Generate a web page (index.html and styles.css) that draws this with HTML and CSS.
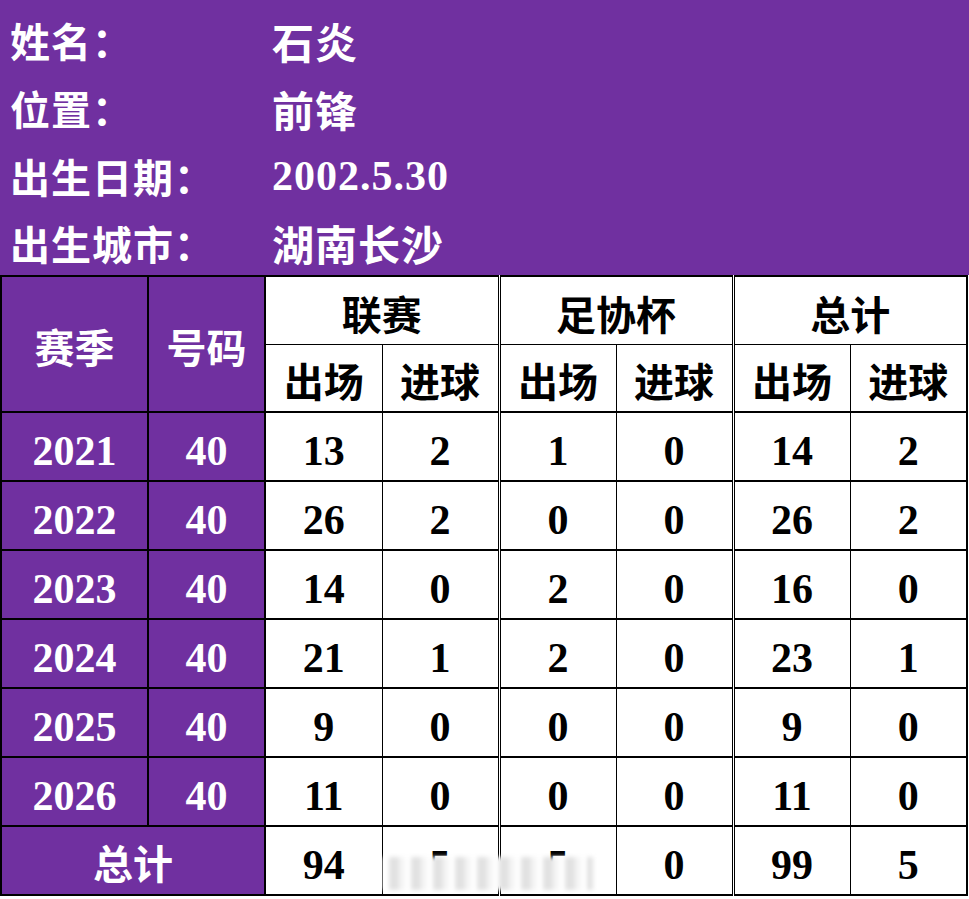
FILE: index.html
```html
<!DOCTYPE html>
<html lang="zh-CN">
<head>
<meta charset="utf-8">
<title>石炎</title>
<link rel="stylesheet" href="styles.css">
</head>
<body>
<div class="page">
  <div class="info">
    <div class="label">姓名：</div><div class="value">石炎</div>
    <div class="label">位置：</div><div class="value">前锋</div>
    <div class="label">出生日期：</div><div class="value">2002.5.30</div>
    <div class="label">出生城市：</div><div class="value">湖南长沙</div>
  </div>
  <div class="table-wrap">
    <table class="stats">
      <colgroup>
        <col class="c-season"><col class="c-num">
        <col class="c-d"><col class="c-d"><col class="c-d"><col class="c-d"><col class="c-d"><col class="c-d">
      </colgroup>
      <thead>
        <tr class="h1">
          <th rowspan="2" class="p">赛季</th>
          <th rowspan="2" class="p">号码</th>
          <th colspan="2" class="grp">联赛</th>
          <th colspan="2" class="grp dbl">足协杯</th>
          <th colspan="2" class="grp dbl">总计</th>
        </tr>
        <tr class="h2">
          <th>出场</th><th>进球</th>
          <th class="dbl">出场</th><th>进球</th>
          <th class="dbl">出场</th><th>进球</th>
        </tr>
      </thead>
      <tbody>
        <tr><td class="p">2021</td><td class="p">40</td><td>13</td><td>2</td><td class="dbl">1</td><td>0</td><td class="dbl">14</td><td>2</td></tr>
        <tr><td class="p">2022</td><td class="p">40</td><td>26</td><td>2</td><td class="dbl">0</td><td>0</td><td class="dbl">26</td><td>2</td></tr>
        <tr><td class="p">2023</td><td class="p">40</td><td>14</td><td>0</td><td class="dbl">2</td><td>0</td><td class="dbl">16</td><td>0</td></tr>
        <tr><td class="p">2024</td><td class="p">40</td><td>21</td><td>1</td><td class="dbl">2</td><td>0</td><td class="dbl">23</td><td>1</td></tr>
        <tr><td class="p">2025</td><td class="p">40</td><td>9</td><td>0</td><td class="dbl">0</td><td>0</td><td class="dbl">9</td><td>0</td></tr>
        <tr><td class="p">2026</td><td class="p">40</td><td>11</td><td>0</td><td class="dbl">0</td><td>0</td><td class="dbl">11</td><td>0</td></tr>
        <tr class="total"><td colspan="2" class="p cjk">总计</td><td>94</td><td>5</td><td class="dbl">5</td><td>0</td><td class="dbl">99</td><td>5</td></tr>
      </tbody>
    </table>
    <div class="smudge"></div>
  </div>
</div>
</body>
</html>
```
FILE: styles.css
```css
html, body {
  margin: 0;
  padding: 0;
  background: #ffffff;
}
.page {
  width: 969px;
  font-family: "Liberation Serif", "Noto Sans CJK SC", serif;
  font-weight: 700;
}
.info {
  box-sizing: border-box;
  height: 275px;
  padding-top: 6px;
  background: #7030a0;
  color: #ffffff;
  display: grid;
  grid-template-columns: 272px 1fr;
  grid-template-rows: 68px 68px 68px 65px;
  align-items: center;
  font-size: 40px;
}
.info .label {
  padding-left: 10px;
  font-family: "Noto Sans CJK SC", sans-serif;
  letter-spacing: 1px;
}
.info .value {
  font-family: "Liberation Serif", "Noto Sans CJK SC", serif;
  font-size: 42px;
  letter-spacing: 1px;
}
.table-wrap {
  position: relative;
  width: 969px;
}
.stats {
  border-collapse: collapse;
  table-layout: fixed;
  width: 967px;
  border: 2px solid #000;
}
.c-season { width: 147px; }
.c-num { width: 117px; }
.c-d { width: 117px; }
.stats th, .stats td {
  padding: 8px 0 0 0;
  text-align: center;
  vertical-align: middle;
  border: 1px solid #000;
  color: #000;
  background: #fff;
  line-height: 1;
}
.stats th {
  font-family: "Noto Sans CJK SC", sans-serif;
  font-size: 40px;
  font-weight: 700;
  padding-top: 4px;
}
.stats td {
  font-size: 42px;
  height: 59px;
}
.stats tr.h1 th { height: 63px; }
.stats tr.h2 th { height: 62px; border-bottom: 2px solid #000; }
.stats tbody tr td { border-bottom: 2px solid #000; border-top: 2px solid #000; }
.stats .p {
  background: #7030a0;
  color: #fff;
  border: 2px solid #000;
}
.stats .dbl {
  border-left: 3px double #000;
}
.stats .grp {
  border-bottom: 1px solid #000;
}
.stats td.cjk {
  font-family: "Noto Sans CJK SC", sans-serif;
  font-size: 40px;
  padding-top: 2px;
}
.smudge {
  position: absolute;
  left: 383px;
  top: 582px;
  width: 210px;
  height: 33px;
  background:
    repeating-linear-gradient(90deg, #ffffff 0 6px, #e2e2e2 6px 16px, #f5f5f5 16px 22px);
  filter: blur(2px);
}
```
